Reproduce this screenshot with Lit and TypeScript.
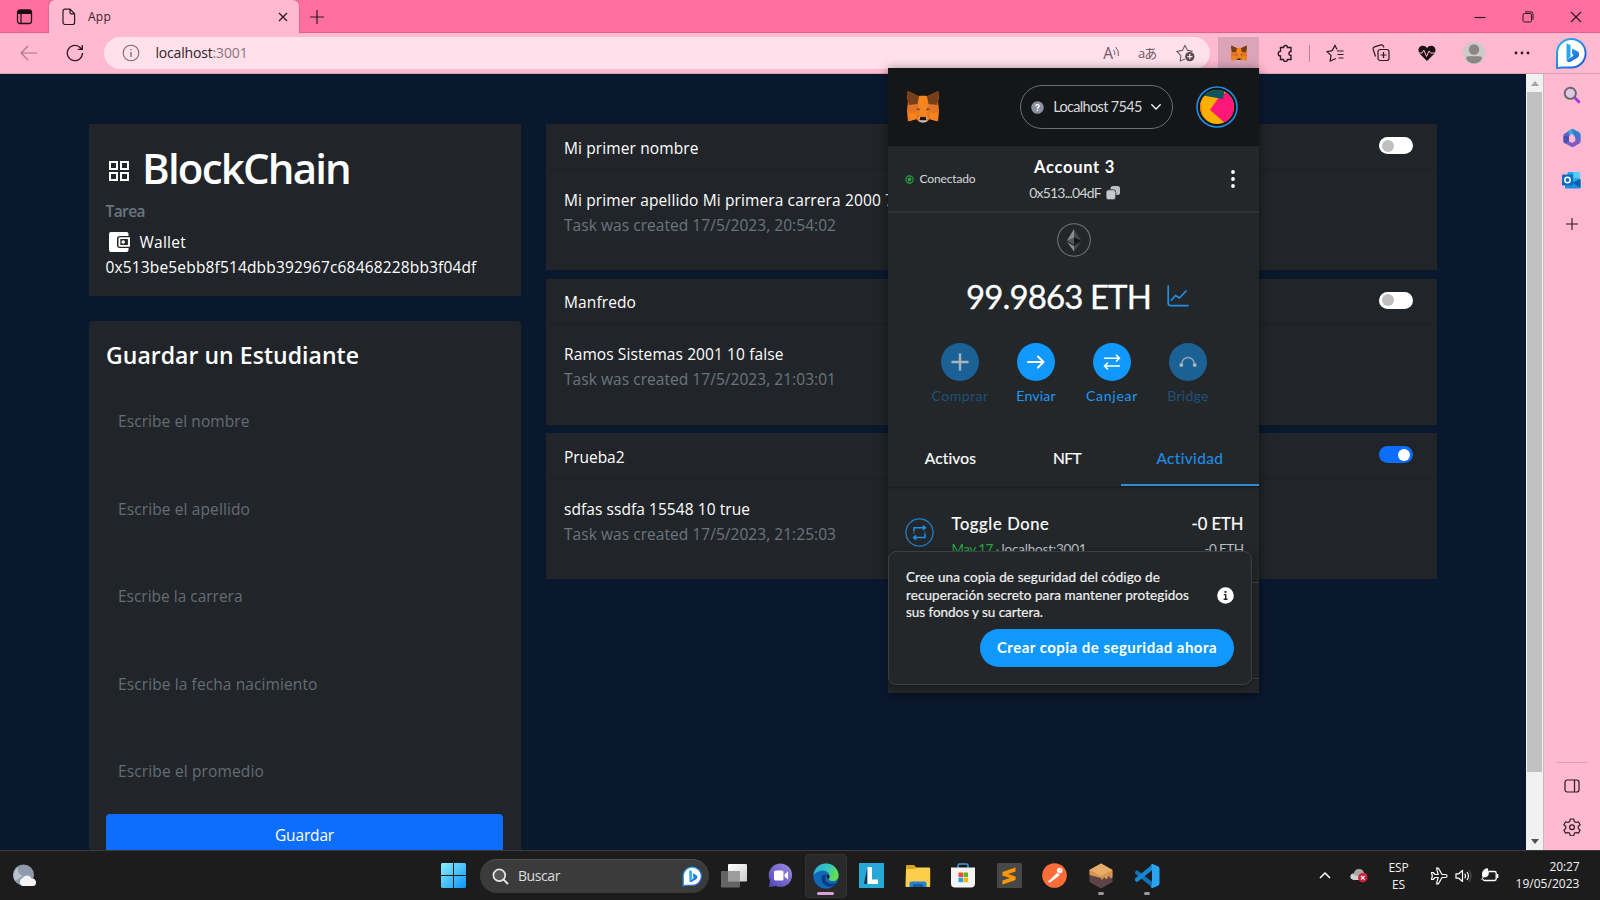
import { LitElement, html, css, svg } from "lit";
import { customElement, property } from "lit/decorators.js";

/** A single line of text tracked so that it fills a given width. */
@customElement("fit-text")
class FitText extends LitElement {
  @property({ type: Number }) w = 0;
  static styles = css`
    :host { display: inline-block; white-space: pre; flex: none; }
  `;
  updated() {
    const span = this.renderRoot.querySelector("span") as HTMLElement;
    this.style.letterSpacing = "0px";
    const n = (this.textContent || "").length;
    const width = span.getBoundingClientRect().width;
    if (n && this.w) {
      this.style.letterSpacing = (this.w - width) / n + "px";
      this.style.width = this.w + "px";
    }
  }
  render() {
    return html`<span><slot></slot></span>`;
  }
}

const t = (text: string, w: number, cls = "") => html`<fit-text class=${cls} .w=${w}>${text}</fit-text>`;

const icon = (w: number, h: number, body: unknown, vb = `0 0 ${w} ${h}`) =>
  html`<svg width=${w} height=${h} viewBox=${vb} fill="none">${body}</svg>`;

const fox = (w: number, h: number) => icon(w, h, svg`
  <path d="M2 1 14 7h8L34 1l1 4-1 8 1 9-1 11-9-2-3 3h-8l-3-3-9 2L1 22l1-9-1-8z" fill="#e8761b"/>
  <path d="M2 1 14 7l-1 8-10 1-2-11zM34 1 22 7l1 8 10 1 2-11z" fill="#763e1a"/>
  <path d="M14 6h8l2 10-2 13h-8l-2-13z" fill="#f5841f"/>
  <path d="M2 24h10l-2 7-7 2zM34 24H24l2 7 7 2z" fill="#f5841f"/>
  <path d="M3 16l10-1-2 8-9 1zM33 16l-10-1 2 8 9 1z" fill="#e27525"/>
  <path d="M10 20l4-1 .5 3zM26 20l-4-1-.5 3z" fill="#6b4a3a"/>
  <path d="M13 29h10l-1 4-2 1.500h-4L14 33z" fill="#d7c1b3"/>
  <path d="M15 28.500h6l.8 3.500h-7.600z" fill="#16191d"/>`, "0 0 36 36");

const bing = (s: number) => icon(s, s, svg`
  <defs><linearGradient id="bg" x1="0" y1="0" x2="1" y2="1"><stop offset="0" stop-color="#2bb8f0"/><stop offset="1" stop-color="#2254cf"/></linearGradient></defs>
  <path d="M2 31V16A14.300 14.300 0 1 1 16.500 30.500H8z" fill="#fff" stroke="url(#bg)" stroke-width="2"/>
  <path d="M11.500 6.500l4 1.500v12l-4 3z" fill="#2aa5ee"/>
  <path d="M17 11.500l5.500 2.800c2.200 1.600 2 5 .2 6.200l-7 4.300c-1.600.8-4.200 0-4.200-1.800l7-4.300-1.500-2.200z" fill="url(#bg)"/>`, "0 0 33 33");

const K = "#2b1a22";
const I = {
  workspace: icon(18, 16, svg`<rect x="1.500" y="1" width="14" height="13.500" rx="2.500" stroke="#1c0d14" stroke-width="1.300"/><path d="M1.500 5V3.500Q1.500 1 4 1h9q2.500 0 2.500 2.500V5z" fill="#1c0d14"/><path d="M5 5v9" stroke="#1c0d14" stroke-width="1.200"/>`),
  page: icon(14, 18, svg`<path d="M3 1.200h5l4.600 4.600V14.500a2 2 0 0 1-2 2H3a2 2 0 0 1-2-2V3.200a2 2 0 0 1 2-2zM8 1.200V4.500q0 1.300 1.300 1.300h3.300" stroke=${K} stroke-width="1.200"/>`),
  x: icon(10, 10, svg`<path d="M1 1l8 8M9 1 1 9" stroke=${K} stroke-width="1.300"/>`),
  plus: icon(16, 16, svg`<path d="M8 1v14M1 8h14" stroke=${K} stroke-width="1.200"/>`),
  min: icon(12, 12, svg`<path d="M.5 6.500h11" stroke=${K} stroke-width="1.100"/>`),
  restore: icon(12, 12, svg`<rect x="1" y="2.500" width="8.500" height="8.500" rx="1.500" stroke=${K}/><path d="M3 .9h6q2 0 2 2v6" stroke=${K}/>`),
  close: icon(12, 12, svg`<path d="M1 1l10 10M11 1 1 11" stroke=${K} stroke-width="1.100"/>`),
  back: icon(18, 16, svg`<path d="M17 8H1.500M8 1 1 8l7 7" stroke="#a87488" stroke-width="1.200"/>`),
  reload: icon(18, 18, svg`<path d="M16.500 9A7.600 7.600 0 1 1 13.500 3L16 5.200M16.300 1v4.400h-4.500" stroke=${K} stroke-width="1.300"/>`),
  info: icon(18, 18, svg`<circle cx="9" cy="9" r="7.800" stroke="#7d6670" stroke-width="1.100"/><path d="M9 8v5M9 5v1.300" stroke="#7d6670" stroke-width="1.300"/>`),
  star: icon(20, 18, svg`<path d="M9 15 4.300 17l.6-5.400L1 7.400l5.300-1L9 1.400l2.600 5 5 1" stroke="#705a64" stroke-width="1.100"/><circle cx="13.800" cy="12.600" r="4.700" fill="#5c4a52"/><path d="M13.800 10v5.200M11.200 12.600h5.200" stroke="#fde2eb" stroke-width="1.200"/>`),
  puzzle: icon(18, 18, svg`<path d="M5 3.500h2.500a2 2 0 0 1 4 0H15v4a2 2 0 0 0 0 4v4h-3.500a2 2 0 0 1-4 0H4.500V12a2.300 2.300 0 1 1 0-4.600V3.500z" stroke=${K} stroke-width="1.400"/>`),
  fav: icon(18, 18, svg`<path d="M10 14.500 4.200 17l.8-5.600L1 7.600l5.200-1L9 1.400l2 4" stroke=${K} stroke-width="1.200"/><path d="M11 7h6.500M11.500 10.500h6M12.500 14h5" stroke=${K} stroke-width="1.200"/>`),
  coll: icon(18, 18, svg`<rect x="6" y="5.500" width="11" height="11" rx="2.200" stroke=${K} stroke-width="1.200"/><path d="M11.500 8v6M8.500 11h6M3.500 12.500 1.200 5.500q-.5-2 1.300-2.600l6.500-2q1.600-.4 2.400 1.200l.5 1.400" stroke=${K} stroke-width="1.200"/>`),
  heart: icon(18, 17, svg`<path d="M9 16 1.500 8.500C-.8 4.500 1 .8 4.800.8 7 .8 8.300 2 9 3.200 9.700 2 11 .8 13.200.8c3.800 0 5.600 3.700 3.300 7.700z" fill="#1d1015"/><path d="M0 8h4l1.800-3 2.700 6.500 2.500-5.500 1.500 2H18" stroke="#ffb9d1"/>`),
  avatar: icon(24, 24, svg`<circle cx="12" cy="12" r="11.300" fill="#cfcaca"/><circle cx="12" cy="8.500" r="5.200" fill="#8b8585"/><path d="M4 17.500q0-2.200 2.500-2.200h11q2.500 0 2.500 2.200-2.500 5-8 5t-8-5z" fill="#8b8585"/>`),
  dots: icon(16, 4, svg`<circle cx="2" cy="2" r="1.400" fill=${K}/><circle cx="8" cy="2" r="1.400" fill=${K}/><circle cx="14" cy="2" r="1.400" fill=${K}/>`),
  lens: icon(18, 18, svg`<path d="M11.500 11.500l4.300 4.300" stroke="#a43ae0" stroke-width="3" stroke-linecap="round"/><circle cx="7.300" cy="7.300" r="5.600" fill="#dccbdd" stroke="#6d6474" stroke-width="1.900"/>`),
  m365: icon(20, 20, svg`<path d="M1.500 6.500 8 2v5.500L6.500 9v5L2.800 15.500 1.500 14z" fill="#5a63c8"/><path d="M5.500 3.500 9.500 1q1.200-.5 2.300.2L17 4.300q1.500 1 1.500 2.700v5.500L13 9.500V8L9.500 6 7 7.500V5z" fill="#3fa5e0"/><path d="M9.500 1 13 9.500l5.500 3V7q0-1.700-1.500-2.700z" fill="#3579c9"/><path d="M18.500 11.500v2q0 1.300-1.200 2l-5.500 3.200q-1.400.8-2.700 0l-6-3.400L6.500 13l3.500 2 3.300-1.900V9z" fill="#7a5bc8"/><path d="M1.500 8v5.500l1.800 2L7 13V8z" fill="#4650b4"/>`),
  outlook: icon(20, 18, svg`<rect x="5.500" y="1" width="12" height="12" rx="1" fill="#28a8ea"/><path d="M11.500 1h6v6h-6z" fill="#50d0f8"/><path d="M3 8l8 4 7.500-4v8.500q0 1-1 1H4q-1 0-1-1z" fill="#1490df"/><path d="M18.500 8v9L10 11.500z" fill="#0f5fb0"/><rect x="0" y="3.500" width="11" height="11" rx="1.200" fill="#0f6cbd"/><circle cx="5.500" cy="9" r="2.700" stroke="#fff" stroke-width="1.500"/>`),
  sideplus: icon(14, 14, svg`<path d="M7 1v12M1 7h12" stroke=${K} stroke-width="1.100"/>`),
  panel: icon(16, 14, svg`<rect x="1" y="1" width="14" height="12" rx="2.200" stroke=${K} stroke-width="1.200"/><path d="M10.500 1v12" stroke=${K} stroke-width="1.200"/>`),
  gear: icon(18, 18, svg`<path d="M7.300 1h3.400l.6 2.600 1.600.9 2.500-.8 1.700 3-1.900 1.800v1.900l1.900 1.800-1.700 3-2.500-.8-1.600.9-.6 2.600H7.300l-.6-2.600-1.600-.9-2.500.8-1.700-3 1.900-1.800V8.500L.9 6.700l1.700-3 2.500.8 1.600-.9z" stroke=${K} stroke-width="1.200" stroke-linejoin="round"/><circle cx="9" cy="9.300" r="2.400" stroke=${K} stroke-width="1.200"/>`),
  grid: icon(20, 20, svg`<g stroke="#fff" stroke-width="2"><path d="M1 1h7v7H1zM12 1h7v7h-7zM1 12h7v7H1zM12 12h7v7h-7z"/></g>`),
  wallet: icon(21, 20, svg`<path d="M2 0h15.500Q19.500 0 19.500 2v2H11Q8 4 8 7v6q0 3 3 3h8.500v2q0 2-2 2H2q-2 0-2-2V2Q0 0 2 0z" fill="#fff"/><path d="M11 5.200h10v9.600H11q-1.500 0-1.500-1.500V6.700q0-1.500 1.500-1.500z" fill="#fff"/><rect x="11.300" y="7" width="7.600" height="6" rx=".5" fill="#212529"/><circle cx="14.200" cy="10" r="1.800" fill="#fff"/>`),
  q: icon(13, 13, svg`<circle cx="6.500" cy="6.500" r="6.300" fill="#8b92a1"/><path d="M4.800 5.300q0-1.700 1.700-1.700t1.700 1.500q0 1-1 1.400-.7.300-.7 1.200M6.500 8.700V10" stroke="#fff" stroke-width="1.400"/>`),
  chev: icon(10, 6, svg`<path d="M.8.8 5 5 9.200.8" stroke="#fff" stroke-width="1.300" stroke-linecap="round"/>`),
  account: icon(42, 42, svg`<defs><clipPath id="ac"><circle cx="21" cy="21" r="17"/></clipPath></defs><circle cx="21" cy="21" r="20" stroke="#1f8fe6" stroke-width="1.600" fill="#141618"/><g clip-path="url(#ac)"><path d="M0 0h42v42H0z" fill="#fbb000"/><path d="M4 8 7 34 4 36z" fill="#fa7900"/><path d="M26 7 14 24 30 38 42 30V7z" fill="#ff1877"/><path d="M4 0v9l23 4 2-13z" fill="#0a5560"/></g>`),
  conn: icon(9, 9, svg`<circle cx="4.500" cy="4.500" r="3.600" stroke="#28a745" stroke-width="1.100"/><circle cx="4.500" cy="4.500" r="1.900" fill="#28a745"/>`),
  copy: icon(14, 14, svg`<rect x="4.500" y="0" width="9.500" height="9" rx="2.500" fill="#bcc0c5"/><rect x="0" y="3.800" width="9.800" height="10" rx="2.600" fill="#c6c9cd" stroke="#24272a" stroke-width=".8"/>`),
  kebab: icon(4, 18, svg`<circle cx="2" cy="2" r="1.900" fill="#fff"/><circle cx="2" cy="9" r="1.900" fill="#fff"/><circle cx="2" cy="16" r="1.900" fill="#fff"/>`),
  eth: icon(34, 34, svg`<circle cx="17" cy="17" r="16.300" stroke="#6f7479" stroke-width="1.100" fill="#24272a"/><path d="M17 6 10 17.500l7 3.700z" fill="#8a8d90"/><path d="M17 6l7 11.500-7 3.700z" fill="#45484b"/><path d="M10 17.500 17 14.500v6.700z" fill="#55585b"/><path d="M24 17.500 17 14.500v6.700z" fill="#121416"/><path d="M10.200 19.200 17 28.500v-5.400z" fill="#8a8d90"/><path d="M23.800 19.200 17 28.500v-5.400z" fill="#45484b"/>`),
  chart: icon(22, 22, svg`<path d="M1.200 1v17q0 2.600 2.600 2.600H21M4.500 15l4-4.500 4 2.500 6.500-7" stroke="#1f8fe6" stroke-width="1.700" stroke-linecap="round" stroke-linejoin="round"/>`),
  buy: icon(18, 18, svg`<path d="M9 .5v17M.5 9h17" stroke="#a8b4bd" stroke-width="2.400"/>`),
  send: icon(18, 14, svg`<path d="M1 7h15M11 1.500 16.500 7 11 12.500" stroke="#fff" stroke-width="2" stroke-linecap="round" stroke-linejoin="round"/>`),
  swap: icon(18, 16, svg`<path d="M1 4.200h15M13 .8l3.500 3.400L13 7.500M17 12H2M5 8.600 1.500 12 5 15.400" stroke="#fff" stroke-width="1.500"/>`),
  bridge: icon(18, 12, svg`<path d="M2.500 8.500Q3.500 1.500 9 1.500t6.500 7" stroke="#8fa3b1" stroke-width="1.500"/><circle cx="2.300" cy="9" r="2" fill="#a8b4bd"/><circle cx="15.700" cy="9" r="2" fill="#a8b4bd"/>`),
  activity: icon(29, 29, svg`<circle cx="14.500" cy="14.500" r="13.600" stroke="#1f7fc8" stroke-width="1.300"/><path d="M9 13V9.700h10M20 16v3.600H10" stroke="#1f8fe6" stroke-width="1.500"/><path d="M18 7.200 21.200 9.700 18 12.200zM11 17.100 7.800 19.600 11 22.100zM9 13v3M20 13v3" fill="#1f8fe6" stroke="#1f8fe6" stroke-width=".6"/>`),
  notice: icon(17, 17, svg`<circle cx="8.500" cy="8.500" r="8.300" fill="#fff"/><path d="M8.500 4v1.900" stroke="#24272a" stroke-width="2"/><path d="M6.800 7.600h1.900V12M6.600 12.200h4" stroke="#24272a" stroke-width="1.400"/>`),
  weather: icon(26, 26, svg`<circle cx="11.500" cy="12" r="10.500" fill="#8f9bab"/><path d="M3 18a10.500 10.500 0 0 1 3-14q-1 7 5 9z" fill="#b7c2cf"/><path d="M10 23a4.500 4.500 0 0 1 .5-8 5 5 0 0 1 9 .5q4.500 0 4.500 4T20 23z" fill="#f2f3f5"/>`),
  win: icon(25, 25, svg`<defs><linearGradient id="wg" x1="0" y1="0" x2="25" y2="25" gradientUnits="userSpaceOnUse"><stop stop-color="#8cf0ff"/><stop offset="1" stop-color="#0a93f5"/></linearGradient></defs><path d="M1 0h11v12H0V1zM13 0h11l1 1v11H13zM0 13h12v12H1l-1-1zM13 13h12v11l-1 1H13z" fill="url(#wg)"/>`),
  search: icon(17, 17, svg`<circle cx="7.300" cy="7.300" r="5.900" stroke="#e6e6e6" stroke-width="1.700" fill="#565656"/><path d="M11.600 11.600 16 16" stroke="#e6e6e6" stroke-width="2"/>`),
  tasks: icon(26, 24, svg`<defs><linearGradient id="tk" x1="0" y1="0" x2="1" y2="1"><stop stop-color="#fff"/><stop offset="1" stop-color="#cfcfcf"/></linearGradient></defs><rect x="7" y="0" width="19" height="17.500" rx="1" fill="url(#tk)"/><rect x="0" y="7" width="19" height="16.500" rx="1" fill="#6d6d6d" opacity=".9"/><path d="M7 7h12v10.500H7z" fill="#9c9c9c"/>`),
  chat: icon(25, 25, svg`<defs><linearGradient id="ch" x1="1" y1="0" x2="0" y2="1"><stop stop-color="#a08de0"/><stop offset="1" stop-color="#4f45b8"/></linearGradient></defs><path d="M1 24 2 17.500A11.700 11.700 0 1 1 8 23z" fill="url(#ch)"/><rect x="6" y="7.500" width="9.500" height="10" rx="1.500" fill="#fff"/><path d="M16.500 11.500 20 8.500v8l-3.500-3z" fill="#fff"/>`),
  edge: icon(26, 26, svg`<defs><linearGradient id="eg" x1="0" y1="0" x2="1" y2=".4"><stop stop-color="#2aa8e8"/><stop offset=".6" stop-color="#35c8b8"/><stop offset="1" stop-color="#63df50"/></linearGradient></defs><circle cx="13" cy="13" r="12.600" fill="#1268b8"/><path d="M.5 12A12.600 12.600 0 0 1 25.600 12c0 4-2.600 6-6 6-2.600 0-4-.8-3.600-2 .8-1.500 1-2.500.5-4C15.500 8.500 11 6.500 7 8c-3 1-5.500 2.500-6.500 4z" fill="url(#eg)"/><path d="M9.500 12.500c-3 5 1 10.500 6.500 11.200 3 .2 6.500-1.700 8-4.200-4 2-9 1.500-11-1.500-1.200-2-.8-4.500.5-6-1.500-1-3-.7-4 .5z" fill="#0c3c80"/><path d="M13.500 12q2-.8 2.800.7-.3 2-.6 3-2-.5-2.200-3.700z" fill="#1c1c1c"/>`),
  lapp: icon(25, 25, svg`<path d="M0 0h25v25H0z" fill="#27a9d8"/><path d="M5 20 8.500 4v17h-3z" fill="#1a3550"/><path d="M8.500 4H13v12.500h6V21H8.500z" fill="#fff"/>`),
  folder: icon(26, 24, svg`<path d="M1 1.500Q1 1 2 1h7l3 3h13v6H1z" fill="#d9a31c"/><path d="M1 5h8l3-1.500h12q1.200 0 1.200 1.200V22q0 1-1 1H1.500Q.5 23 .5 22z" fill="#fbcf4c"/><path d="M4.500 23v-3.500q0-2 2-2h13q2 0 2 2V23z" fill="#2480d0"/><path d="M8 20.300h10V23H8z" fill="#155a9c"/>`),
  store: icon(24, 25, svg`<path d="M7 6V2.500Q7 1 8.500 1h7Q17 1 17 2.500V6" stroke="#3aa0dc" stroke-width="1.500"/><path d="M0 4.500h24v16q0 4-4 4H4q-4 0-4-4z" fill="#f3f3f3"/><path d="M7.500 9.500H12V14H7.500z" fill="#e8502c"/><path d="M12.500 9.500H17V14h-4.500z" fill="#6bae1e"/><path d="M7.500 14.700H12v4.500H7.500z" fill="#22a0e8"/><path d="M12.500 14.700H17v4.500h-4.500z" fill="#f8b60c"/>`),
  sublime: icon(25, 25, svg`<rect width="25" height="25" rx="1.500" fill="#484848"/><path d="M5.500 9 18.500 4.500V8.500L11 11l7.500 2.500v3.500L5.500 21.500v-4L13 15 5.500 12.500z" fill="#ff9800"/>`),
  postman: icon(25, 25, svg`<circle cx="12.500" cy="12.500" r="12.300" fill="#ff6c37"/><path d="M15 9.500 18 12 8 19.500 5.500 19z" fill="#fff"/><circle cx="17.700" cy="7.500" r="2.800" fill="#fff"/><path d="M16 9 7 17.500M19 5.500 17.500 8" stroke="#ff6c37" stroke-width=".6"/>`),
  ganache: icon(24, 26, svg`<path d="M12 1 23.500 7v12L12 25.500.5 19V7z" fill="#5c4445"/><path d="M12 .5 23.500 7v7q-1.500 2.500-3 0v-1q-1.500-.5-2 2-1 2.500-2.500 0-1-2-2 1-2 1.500-2-1L.5 12V7z" fill="#d9954e"/><path d="M12 .5 23.500 7 12 13 .5 7z" fill="#e8ac68"/>`),
  vscode: icon(26, 26, svg`<path d="M1 9 3 7l16 12.500V25L1 10.500z" fill="#0f74bc"/><path d="M1 17.500 3 19.300 19 6.500V1L1 15.500z" fill="#1488d2"/><path d="M18 .8 24 3.200q1.500.8 1.500 2.200v15.200q0 1.400-1.500 2.200L18 25.200q-1.200-.4-.8-1.700l.8-1.500V4l-.8-1.500q-.4-1.300.8-1.700z" fill="#29a4f0"/>`),
  up: icon(12, 7, svg`<path d="M1 6 6 1l5 5" stroke="#fff" stroke-width="1.500"/>`),
  cloud: icon(18, 15, svg`<path d="M4 11.500Q.5 11.500.5 8.500T4 5q1-4 5-4t5 4q3 .5 3 3.500t-3 3z" fill="#a9a9a9"/><path d="M1.500 6 14 10l-2 2H4q-3.500-.5-3.500-3.500z" fill="#d0d0d0"/><circle cx="12.800" cy="9.800" r="4.700" fill="#d31f35"/><path d="M11 8l3.600 3.600M14.600 8 11 11.600" stroke="#fff" stroke-width="1.200"/>`),
  plane: icon(18, 18, svg`<path d="M1.500 5.500h1.700L5 7.500h3.200L6.500 1.200h2L12 7.500h3.500a1.500 1.500 0 0 1 0 3H12l-3.500 6.300h-2l1.700-6.300H5l-1.800 2H1.500l.8-3.500z" stroke="#fff" stroke-width="1.200" stroke-linejoin="round"/>`),
  speaker: icon(17, 14, svg`<path d="M1 4.800h2.800L7.500 1.500v11L3.800 9.200H1z" stroke="#fff" stroke-width="1.200" stroke-linejoin="round"/><path d="M9.800 4.700q1.600 2.300 0 4.600M12 3q3 4 0 8" stroke="#fff" stroke-width="1.200"/><path d="M14 1.200q4 5.800 0 11.600" stroke="#555" stroke-width="1.100"/>`),
  battery: icon(18, 15, svg`<path d="M8 3.500H13.500q1.700 0 1.700 1.700v5.600q0 1.700-1.700 1.700H3.700Q2 12.500 2 11" stroke="#fff" stroke-width="1.300"/><path d="M16.600 6v4" stroke="#fff" stroke-width="1.500"/><path d="M6.500 0q-4.500 1-5.500 5-.5 3.500 1 4.500Q6.500 9.500 7.500 7 8.500 3.500 6.500 0z" fill="#fff"/><path d="M.5 11.500 4.500 6" stroke="#fff"/>`),
};

const inputs: [string, number][] = [
  ["Escribe el nombre", 131.5], ["Escribe el apellido", 132], ["Escribe la carrera", 124.5],
  ["Escribe la fecha nacimiento", 199.5], ["Escribe el promedio", 146],
];
const tasks = [
  { a: "Mi primer nombre", aw: 134.5, b: "Mi primer apellido Mi primera carrera 2000 7", bw: 330, c: "20:54:02", on: false },
  { a: "Manfredo", aw: 72, b: "Ramos Sistemas 2001 10 false", bw: 219.5, c: "21:03:01", on: false },
  { a: "Prueba2", aw: 60.5, b: "sdfas ssdfa 15548 10 true", bw: 186, c: "21:25:03", on: true },
];
const actions = [
  { i: I.buy, l: "Comprar", w: 57, off: true }, { i: I.send, l: "Enviar", w: 39.5, off: false },
  { i: I.swap, l: "Canjear", w: 52, off: false }, { i: I.bridge, l: "Bridge", w: 41.5, off: true },
];
const apps = [
  { i: I.tasks }, { i: I.chat }, { i: I.edge, active: true }, { i: I.lapp }, { i: I.folder }, { i: I.store },
  { i: I.sublime }, { i: I.postman }, { i: I.ganache, run: true }, { i: I.vscode, run: true },
] as { i: unknown; active?: boolean; run?: boolean }[];

@customElement("app-root")
class AppRoot extends LitElement {
  static styles = css`
    :host { display: flex; flex-direction: column; width: 1600px; height: 900px; overflow: hidden; position: relative;
      font-family: "Open Sans", "Noto Sans", sans-serif; font-size: 15.500px; line-height: 24px; color: #fff; background: #0a182e; }
    * { box-sizing: border-box; }
    svg { display: block; flex: none; }
    .row { display: flex; align-items: center; }
    .c { display: flex; align-items: center; justify-content: center; flex: none; }
    .strip { height: 33px; background: #ff6f9f; flex: none; box-shadow: inset 0 -2px 1px -1px #dc5f8a; }
    .ws { width: 49px; }
    .tab { width: 250px; height: 33px; background: #ffb9d1; border-radius: 6px 6px 0 0; padding: 0 11px 0 13px; color: #35222b; font-size: 12px; box-shadow: 0 0 2px #b34a70; clip-path: inset(0 -3px 0 -3px); }
    .tab fit-text { margin-left: 12px; }
    .tab .end { margin-left: auto; }
    .newtab { width: 36px; }
    .wins { margin-left: auto; padding-right: 18px; gap: 36px; }
    .bar { height: 41px; background: #ffb9d1; flex: none; padding-right: 3px; border-bottom: 1px solid #d99fb3; }
    .b1 { width: 58px; } .b2 { width: 34px; }
    .url { width: 1106px; height: 32px; margin-left: 12px; border-radius: 16px; background: #fee1ea; padding: 0 14px 0 18px; font-size: 14px; color: #2d2328; }
    .url .addr { margin-left: 15.500px; } .port { color: #8b767f; }
    .tools { margin-left: auto; color: #705a64; gap: 18px; }
    .read { font-size: 15.500px; line-height: 18px; }
    .kana { font-family: "Open Sans", "Noto Sans CJK JP", sans-serif; font-size: 13px; width: 20px; letter-spacing: -1px; }
    .foxbtn { width: 41px; height: 32px; margin: 0 3px 0 8px; background: #dba4b9; }
    .w46 { width: 46px; } .w48 { width: 48px; } .w50 { width: 50px; }
    .sep { width: 1px; height: 17px; background: #b98496; margin: 0 2px 0 1px; }
    .mid { display: flex; flex: 1; min-height: 0; }
    .page { width: 1526px; display: flex; gap: 25.500px; padding: 50px 0 0 88.500px; overflow: hidden; align-items: flex-start; background: #0a182e; }
    .left { width: 432px; display: flex; flex-direction: column; gap: 25px; }
    .card { background: #212529; }
    .info { height: 172px; padding: 16px 17px 0; display: flex; flex-direction: column; }
    .h1 { font-size: 42px; font-weight: 600; line-height: 56px; }
    .info .title { gap: 13.500px; padding-left: 3px; height: 56px; }
    .title svg { margin-top: 6px; }
    .muted { color: #6c757d; }
    .tarea { font-weight: 600; line-height: 30px; }
    .wal { gap: 10px; padding-left: 3px; height: 31px; }
    .info .hash { line-height: 20px; }
    .form { height: 600px; padding: 16.500px 17.500px; border-radius: 4px 4px 0 0; display: flex; flex-direction: column; }
    .h2 { font-size: 23px; font-weight: 600; line-height: 34px; margin-bottom: 6px; }
    .inp { height: 87.500px; padding-left: 12px; color: #656c73; }
    .save { height: 42px; background: #0d6efd; border-radius: 4px; margin-top: -1px; }
    .right { width: 891px; display: flex; flex-direction: column; gap: 8.500px; }
    .task { height: 146px; }
    .th { height: 46px; padding: 2px 24.500px 0 18px; border-bottom: 1px solid #1c1f23; justify-content: space-between; }
    .tb { padding: 17.500px 18px; display: flex; flex-direction: column; line-height: 25px; }
    .sw { width: 34px; height: 17px; border-radius: 9px; background: #fff; display: flex; align-items: center; padding: 0 3px; margin-top: -4px; }
    .sw i { width: 12px; height: 12px; border-radius: 50%; background: #bfbfbf; }
    .sw.on { background: #0d6efd; justify-content: flex-end; }
    .sw.on i { background: #fff; }
    .scroll { width: 18px; background: #f1f1f1; display: flex; flex-direction: column; align-items: center; border-right: 1px solid #cdb6c0; }
    .arrow { height: 18px; }
    .thumb { width: 15px; height: 680px; background: #c1c1c1; }
    .scroll .down { margin-top: auto; }
    .side { flex: 1; background: #ffb9d1; display: flex; flex-direction: column; align-items: center; }
    .side .s { height: 42.500px; }
    .side .low { height: 41.500px; }
    .side .last { margin-bottom: 2px; }
    .side .s:nth-child(3) { height: 41px; } .side .s:nth-child(4) { height: 47px; }
    .side hr { width: 30px; border: 0; height: 1px; background: #dd9fb6; margin: auto 0 2px; }
    .task-bar { height: 50px; background: #1c1c1c; border-top: 1px solid #3b3b3e; flex: none; color: #f3f3f3; font-size: 13.500px; }
    .weather { width: 441px; padding-left: 12px; }
    .find { width: 229px; height: 34px; margin: 0 2.500px 0 14px; border-radius: 17px; background: #3b3b3b; border-top: 1px solid #505050; padding: 0 6px 0 12px; }
    .find fit-text { margin-left: 9px; color: #dedede; font-size: 14px; }
    .find .end { margin-left: auto; }
    .app { width: 45.800px; height: 48px; position: relative; }
    .app.active::before { content: ""; width: 40px; height: 42px; border-radius: 4px; background: #292929; border: 1px solid #333; position: absolute; }
    .app svg { position: relative; }
    .mark { position: absolute; bottom: 4.500px; width: 6px; height: 3px; border-radius: 2px; background: #9a9a9a; }
    .active .mark { width: 17px; background: #dc9fd6; }
    .tray { margin-left: auto; padding-right: 20.500px; }
    .tray .t14 { width: 14px; } .t32 { width: 32px; } .t36 { width: 36px; } .t38 { width: 38px; } .t44 { width: 44px; }
    .stack { display: flex; flex-direction: column; line-height: 17px; font-size: 12px; align-items: center; }
    .clock { align-items: flex-end; margin-left: 7px; margin-top: -1px; }

    .popup { position: absolute; left: 888px; top: 68px; width: 371px; height: 625px; background: #24272a; font-family: Lato, sans-serif; box-shadow: 0 2px 10px rgba(0,0,0,.5); overflow: hidden; display: flex; flex-direction: column; }
    .ph { height: 78px; background: #141618; padding: 0 21.500px 0 17px; flex: none; }
    .net { width: 153px; height: 44px; border: 1px solid #6a7078; border-radius: 22px; margin-left: auto; margin-right: 23px; font-size: 14.500px; color: #d6d9dc; justify-content: center; gap: 9px; }
    .acct { height: 67px; border-bottom: 2px solid #303438; flex: none; display: grid; grid-template-columns: 112px 1fr 112px; align-items: center; padding-top: 1px; }
    .conn { gap: 6px; padding-left: 16.500px; font-size: 12px; color: #d6d9dc; }
    .name { display: flex; flex-direction: column; align-items: center; padding: 2px 0 0 2px; }
    .an { font-size: 16.500px; font-weight: 700; line-height: 25px; }
    .ad { gap: 5px; font-size: 14px; color: #d0d3d6; line-height: 25px; }
    .menu { justify-content: flex-end; padding-right: 24px; }
    .ethw { padding-top: 10px; height: 61px; display: flex; justify-content: center; flex: none; }
    .amt { height: 44px; font-size: 33px; gap: 16px; padding-left: 78px; flex: none; }
    .amt .n { -webkit-text-stroke: .3px #fff; }
    .acts { padding: 25px 0 0 34px; height: 110px; display: flex; font-size: 14.200px; color: #1f97f6; flex: none; }
    .act { width: 76px; display: flex; flex-direction: column; align-items: center; gap: 3px; }
    .disc { width: 38px; height: 38px; border-radius: 50%; background: #1098fc; }
    .off { color: #1e5278; } .off .disc { background: #1b6196; }
    .tabs { height: 59px; border-bottom: 1px solid #1b1e20; box-shadow: 0 1px 2px rgba(0,0,0,.25); flex: none; display: grid; grid-template-columns: 125px 108px 138px; font-size: 15.500px; }
    .tabs .c { padding-top: 2px; -webkit-text-stroke: .2px #fff; }
    .tabs .sel { padding-top: 4px; color: #1f8fe6; border-bottom: 2px solid #2a8cd8; -webkit-text-stroke: .1px #1f8fe6; }
    .tx { height: 96px; border-bottom: 1px solid #3b4046; flex: none; padding: 24px 15.500px 0 17px; display: flex; align-items: flex-start; }
    .tx svg { margin-top: 7px; }
    .txb { flex: 1; margin-left: 17.500px; display: flex; flex-direction: column; }
    .l1 { font-size: 16.500px; justify-content: space-between; line-height: 27px; -webkit-text-stroke: .2px #fff; }
    .l2 { font-size: 13.500px; justify-content: space-between; line-height: 23px; color: #bbc0c5; }
    .green { color: #28a745; }
    .note { position: absolute; left: 0; top: 483px; width: 364px; height: 134px; background: #24272a; border: 1px solid #3b4046; border-radius: 8px; padding: 17px 17px 0 17px; box-shadow: 0 2px 8px rgba(0,0,0,.4); display: flex; flex-direction: column; font-size: 13.500px; }
    .nt { justify-content: space-between; line-height: 17.500px; color: #f0f1f2; }
    .nt .lines { display: flex; flex-direction: column; -webkit-text-stroke: .2px #f0f1f2; }
    .cta { align-self: flex-end; width: 254px; height: 38.500px; border-radius: 20px; background: #1098fc; margin-top: 7px; font-size: 15px; font-weight: 700; padding-bottom: 2px; }
  `;

  render() {
    return html`
      <div class="strip row">
        <div class="ws c">${I.workspace}</div>
        <div class="tab row">${I.page}${t("App", 23)}<span class="end">${I.x}</span></div>
        <div class="newtab c">${I.plus}</div>
        <div class="wins row">${I.min}${I.restore}${I.close}</div>
      </div>
      <div class="bar row">
        <div class="b1 c">${I.back}</div><div class="b2 c">${I.reload}</div>
        <div class="url row">${I.info}<span class="addr row">${t("localhost", 57)}${t(":3001", 35, "port")}</span>
          <span class="tools row"><span class="row read">A${icon(7, 14, svg`<path d="M.5 4q2 2.200 1.200 5M2.500 1q4 4 2.800 9" stroke="#705a64"/>`)}</span><span class="kana">aあ</span>${I.star}</span>
        </div>
        <div class="foxbtn c">${fox(18, 17)}</div>
        <div class="w46 c">${I.puzzle}</div><span class="sep"></span>
        <div class="w46 c">${I.fav}</div><div class="w46 c">${I.coll}</div><div class="w46 c">${I.heart}</div>
        <div class="w48 c">${I.avatar}</div><div class="w48 c">${I.dots}</div><div class="w50 c">${bing(33)}</div>
      </div>
      <div class="mid">
        <div class="page">
          <div class="left">
            <div class="card info">
              <div class="title row">${I.grid}${t("BlockChain", 208, "h1")}</div>
              ${t("Tarea", 39.5, "tarea muted")}
              <div class="wal row">${I.wallet}${t("Wallet", 46.5)}</div>
              ${t("0x513be5ebb8f514dbb392967c68468228bb3f04df", 371, "hash")}
            </div>
            <div class="card form">
              ${t("Guardar un Estudiante", 253, "h2")}
              ${inputs.map(([l, w]) => html`<div class="inp row">${t(l, w)}</div>`)}
              <div class="save c">${t("Guardar", 59)}</div>
            </div>
          </div>
          <div class="right">
            ${tasks.map((k) => html`<div class="card task">
              <div class="th row">${t(k.a, k.aw)}<span class="sw ${k.on ? "on" : ""}"><i></i></span></div>
              <div class="tb">${t(k.b, k.bw)}${t("Task was created 17/5/2023, " + k.c, 272, "muted")}</div>
            </div>`)}
          </div>
        </div>
        <div class="scroll">
          <div class="arrow c">${icon(8, 5, svg`<path d="M0 5 4 0l4 5z" fill="#a3a3a3"/>`)}</div>
          <div class="thumb"></div>
          <div class="arrow c down">${icon(8, 5, svg`<path d="M0 0h8L4 5z" fill="#505050"/>`)}</div>
        </div>
        <div class="side">
          <div class="s c">${I.lens}</div><div class="s c">${I.m365}</div><div class="s c">${I.outlook}</div><div class="s c">${I.sideplus}</div>
          <hr><div class="s low c">${I.panel}</div><div class="s low last c">${I.gear}</div>
        </div>
      </div>
      <div class="task-bar row">
        <div class="weather">${I.weather}</div>${I.win}
        <div class="find row">${I.search}${t("Buscar", 42)}<span class="end">${bing(21)}</span></div>
        ${apps.map((a) => html`<div class="app c ${a.active ? "active" : ""}">${a.i}${a.active || a.run ? html`<span class="mark"></span>` : ""}</div>`)}
        <div class="tray row">
          <div class="c t32">${I.up}</div><div class="c t36">${I.cloud}</div>
          <div class="stack c t44">${t("ESP", 20)}${t("ES", 13)}</div>
          <div class="c t36">${I.plane}</div><div class="c t14">${I.speaker}</div>
          <div class="c t38">${I.battery}</div>
          <div class="stack clock">${t("20:27", 30)}${t("19/05/2023", 64)}</div>
        </div>
      </div>
      <div class="popup">
        <div class="ph row">${fox(36, 34)}
          <div class="net row">${I.q}${t("Localhost 7545", 88.5)}${I.chev}</div>${I.account}
        </div>
        <div class="acct">
          <div class="conn row">${I.conn}${t("Conectado", 56)}</div>
          <div class="name">${t("Account 3", 81, "an")}<div class="ad row">${t("0x513...04dF", 71.5)}${I.copy}</div></div>
          <div class="menu row">${I.kebab}</div>
        </div>
        <div class="ethw">${I.eth}</div>
        <div class="amt row">${t("99.9863 ETH", 185, "n")}${I.chart}</div>
        <div class="acts">
          ${actions.map((a) => html`<div class="act ${a.off ? "off" : ""}"><div class="disc c">${a.i}</div>${t(a.l, a.w)}</div>`)}
        </div>
        <div class="tabs"><div class="c">${t("Activos", 51.5)}</div><div class="c">${t("NFT", 28)}</div><div class="c sel">${t("Actividad", 67)}</div></div>
        <div class="tx">${I.activity}<div class="txb">
          <div class="l1 row">${t("Toggle Done", 98)}${t("-0 ETH", 52)}</div>
          <div class="l2 row"><span class="row">${t("May 17 · ", 50, "green")}${t("localhost:3001", 85)}</span>${t("-0 ETH", 39)}</div>
        </div></div>
        <div class="tx"></div>
        <div class="note">
          <div class="nt row"><div class="lines">
            ${t("Cree una copia de seguridad del código de", 254)}${t("recuperación secreto para mantener protegidos", 283)}${t("sus fondos y su cartera.", 137)}
          </div>${I.notice}</div>
          <div class="cta c">${t("Crear copia de seguridad ahora", 220)}</div>
        </div>
      </div>`;
  }
}
